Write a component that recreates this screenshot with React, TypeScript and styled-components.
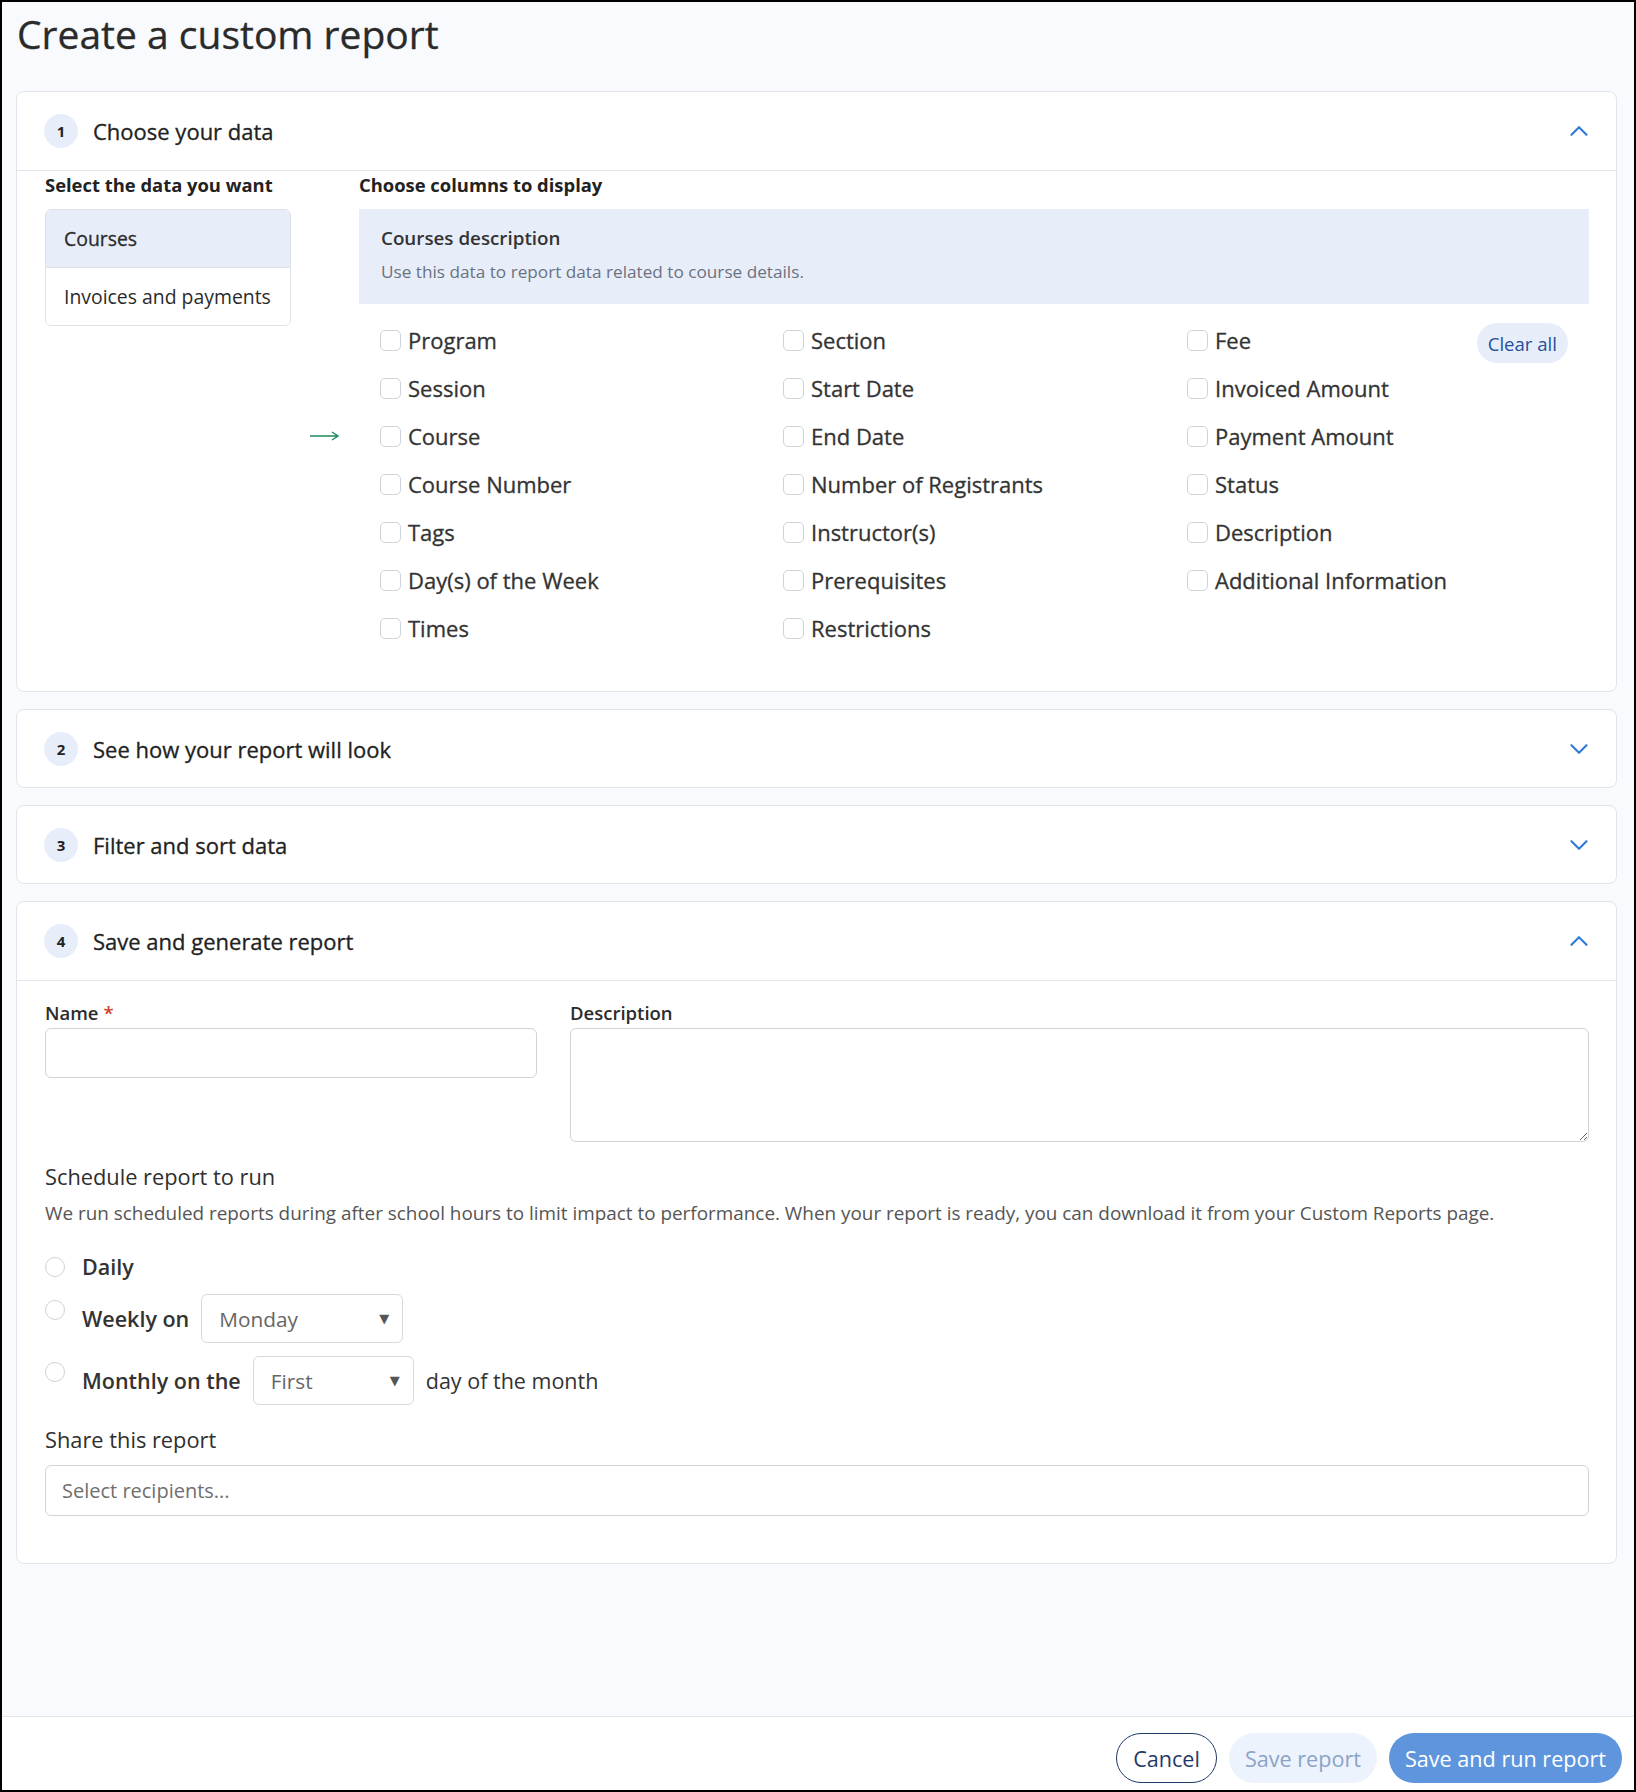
import styled, { createGlobalStyle, css } from "styled-components";
import { ChevronDown, ChevronUp } from "lucide-react";

const GlobalStyle = createGlobalStyle`
  html, body {
    margin: 0;
    padding: 0;
    background: #000;
  }
  body {
    font-family: "Open Sans", "Noto Sans", Arial, sans-serif;
    color: #2b2b2b;
  }
  * {
    box-sizing: border-box;
  }
`;

// Open Sans ships without a 500 weight here, so medium text gets a hairline stroke
const medium = css`
  font-weight: 400;
  -webkit-text-stroke: 0.3px currentColor;
`;

const Frame = styled.div`
  width: 1636px;
  height: 1792px;
  border: 2px solid #000;
  background: #f8fafd;
  display: flex;
  flex-direction: column;
  overflow: hidden;
`;

const Main = styled.main`
  flex: 1;
  padding: 9px 17px 0 14px;
  display: flex;
  flex-direction: column;
  gap: 17px;
`;

const PageTitle = styled.h1`
  margin: 0 0 18px 1px;
  font-size: 39px;
  line-height: 45px;
  color: #2a2a2a;
  ${medium}
`;

const Card = styled.section`
  background: #fff;
  border: 1px solid #e1e4ea;
  border-radius: 8px;
`;

const CardHeader = styled.header<{ $open?: boolean }>`
  height: ${({ $open }) => ($open ? "79px" : "77px")};
  display: flex;
  align-items: center;
  gap: 15px;
  padding: 0 22px 0 27px;
  border-bottom: ${({ $open }) => ($open ? "1px solid #e1e4ea" : "none")};
`;

const StepBadge = styled.span`
  width: 34px;
  height: 34px;
  border-radius: 50%;
  background: #e7eefa;
  display: inline-flex;
  align-items: center;
  justify-content: center;
  font-size: 15px;
  font-weight: 700;
  color: #222;
`;

const StepTitle = styled.h2`
  margin: 0;
  flex: 1;
  font-size: 22px;
  color: #222;
  ${medium}
`;

const Toggle = styled.span`
  display: inline-flex;
  color: #2f7bd8;
`;

const DataBody = styled.div`
  display: grid;
  grid-template-columns: 246px 1fr;
  column-gap: 68px;
  padding: 2px 27px 39px 28px;
`;

const ColumnHeading = styled.h3`
  margin: 0 0 12px;
  font-size: 18.4px;
  line-height: 24px;
  font-weight: 700;
  color: #222;
`;

const SourceList = styled.ul`
  margin: 0;
  padding: 0;
  list-style: none;
  border: 1px solid #dde1e8;
  border-radius: 6px;
  overflow: hidden;
`;

const SourceItem = styled.li<{ $active?: boolean }>`
  height: ${({ $active }) => ($active ? "58px" : "57px")};
  display: flex;
  align-items: center;
  padding-left: 18px;
  font-size: 19.4px;
  color: #2b2b2b;
  background: ${({ $active }) => ($active ? "#e7eefa" : "#fff")};
  border-bottom: ${({ $active }) => ($active ? "1px solid #dde1e8" : "none")};
  ${({ $active }) => $active && medium}
`;

const DescriptionBox = styled.div`
  background: #e7eefa;
  height: 95px;
  padding: 16px 22px 0;
`;

const DescTitle = styled.div`
  font-size: 18.8px;
  line-height: 26px;
  font-weight: 600;
  color: #333;
`;

const DescText = styled.div`
  margin-top: 9px;
  font-size: 17.2px;
  line-height: 24px;
  color: #6b7280;
`;

const Options = styled.div`
  position: relative;
  display: flex;
  padding: 12px 21px 0;
`;

const OptionColumn = styled.div<{ $width: number }>`
  width: ${({ $width }) => $width}px;
  display: flex;
  flex-direction: column;
`;

const OptionRow = styled.label`
  height: 48px;
  display: flex;
  align-items: center;
  gap: 7px;
  font-size: 22px;
  color: #333;
  ${medium}
`;

const Checkbox = styled.input.attrs({ type: "checkbox" })`
  appearance: none;
  margin: 0;
  width: 21px;
  height: 21px;
  border: 1px solid #cfd3da;
  border-radius: 5px;
  background: #fff;
`;

const ClearButton = styled.button`
  margin-left: auto;
  margin-top: 7px;
  flex-shrink: 0;
  white-space: nowrap;
  height: 40px;
  padding: 0 11px;
  border: none;
  border-radius: 20px;
  background: #e7eefa;
  color: #1f4f9c;
  font-family: inherit;
  font-size: 18.6px;
`;

const Pointer = styled.svg`
  position: absolute;
  left: -50px;
  top: 126px;
`;

const FormBody = styled.div`
  padding: 20px 27px 47px 28px;
`;

const FieldGrid = styled.div`
  display: grid;
  grid-template-columns: 492px 1fr;
  column-gap: 33px;
  align-items: start;
`;

const Field = styled.div`
  display: flex;
  flex-direction: column;
  gap: 3px;
`;

const FieldLabel = styled.label`
  font-size: 18.5px;
  line-height: 24px;
  font-weight: 600;
  color: #2b2b2b;
`;

const Required = styled.span`
  color: #d23a2c;
  margin-left: 5px;
`;

const TextInput = styled.input`
  height: 50px;
  border: 1px solid #cfd3da;
  border-radius: 6px;
  padding: 0 16px;
  font-family: inherit;
  font-size: 18px;
  background: #fff;
  &::placeholder {
    color: #6f6f6f;
  }
`;

const TextArea = styled.textarea`
  height: 114px;
  border: 1px solid #cfd3da;
  border-radius: 6px;
  padding: 12px 16px;
  font-family: inherit;
  font-size: 18px;
  background: #fff;
`;

const SubHeading = styled.h3`
  margin: 21px 0 0;
  font-size: 21.8px;
  line-height: 28px;
  font-weight: 400;
  color: #2f2f2f;
`;

const Note = styled.p`
  margin: 10px 0 0;
  font-size: 18.9px;
  line-height: 25px;
  color: #555;
`;

const ScheduleList = styled.div`
  margin-top: 27px;
  display: flex;
  flex-direction: column;
  gap: 13px;
`;

const ScheduleRow = styled.div`
  display: flex;
  align-items: center;
  gap: 12px;
  font-size: 21.5px;
  line-height: 28px;
`;

const Radio = styled.input.attrs({ type: "radio" })<{ $offset?: number }>`
  appearance: none;
  margin: 0 5px 0 0;
  width: 20px;
  height: 20px;
  border: 1px solid #cfd2d8;
  border-radius: 50%;
  background: #fff;
  align-self: ${({ $offset }) => ($offset ? "flex-start" : "center")};
  margin-top: ${({ $offset }) => $offset ?? 0}px;
`;

const OptionText = styled.span`
  font-weight: 600;
  color: #333;
`;

const PlainText = styled.span`
  color: #333;
`;

const SelectBox = styled.div<{ $width: number }>`
  width: ${({ $width }) => $width}px;
  height: 49px;
  border: 1px solid #d6d9de;
  border-radius: 6px;
  background: #fff;
  display: flex;
  align-items: center;
  justify-content: space-between;
  padding: 0 13px 0 17px;
  color: #666;
  font-size: 20.8px;
`;

const Caret = styled.span`
  font-family: "DejaVu Sans", sans-serif;
  font-size: 13px;
  color: #555;
`;

const ShareLabel = styled(SubHeading)`
  margin-top: 21px;
`;

const ShareInput = styled(TextInput)`
  margin-top: 11px;
  width: 100%;
  height: 51px;
  font-size: 20px;
`;

const Footer = styled.footer`
  height: 74px;
  background: #fff;
  border-top: 1px solid #e1e4ea;
  display: flex;
  justify-content: flex-end;
  align-items: flex-start;
  gap: 12px;
  padding: 16px 12px 0 0;
`;

const FooterButton = styled.button<{ $variant: "outline" | "muted" | "primary" }>`
  height: 50px;
  padding: 0 16px;
  border-radius: 25px;
  font-family: inherit;
  font-size: 21.6px;
  border: ${({ $variant }) =>
    $variant === "outline" ? "1.5px solid #1f3a68" : "none"};
  background: ${({ $variant }) =>
    $variant === "outline" ? "#fff" : $variant === "muted" ? "#edf3fc" : "#5f95dc"};
  color: ${({ $variant }) =>
    $variant === "outline" ? "#1f3a68" : $variant === "muted" ? "#8aa3c7" : "#fff"};
`;

const columns: { width: number; items: string[] }[] = [
  {
    width: 403,
    items: ["Program", "Session", "Course", "Course Number", "Tags", "Day(s) of the Week", "Times"],
  },
  {
    width: 404,
    items: ["Section", "Start Date", "End Date", "Number of Registrants", "Instructor(s)", "Prerequisites", "Restrictions"],
  },
  {
    width: 270,
    items: ["Fee", "Invoiced Amount", "Payment Amount", "Status", "Description", "Additional Information"],
  },
];

function StepHeader({ step, title, open }: { step: number; title: string; open?: boolean }) {
  return (
    <CardHeader $open={open}>
      <StepBadge>{step}</StepBadge>
      <StepTitle>{title}</StepTitle>
      <Toggle>
        {open ? <ChevronUp size={30} strokeWidth={1.7} /> : <ChevronDown size={30} strokeWidth={1.7} />}
      </Toggle>
    </CardHeader>
  );
}

export default function App() {
  return (
    <>
      <GlobalStyle />
      <Frame>
        <Main>
          <PageTitle>Create a custom report</PageTitle>

          <Card>
            <StepHeader step={1} title="Choose your data" open />
            <DataBody>
              <div>
                <ColumnHeading>Select the data you want</ColumnHeading>
                <SourceList>
                  <SourceItem $active>Courses</SourceItem>
                  <SourceItem>Invoices and payments</SourceItem>
                </SourceList>
              </div>
              <div>
                <ColumnHeading>Choose columns to display</ColumnHeading>
                <DescriptionBox>
                  <DescTitle>Courses description</DescTitle>
                  <DescText>Use this data to report data related to course details.</DescText>
                </DescriptionBox>
                <Options>
                  <Pointer width="31" height="12" viewBox="0 0 31 12">
                    <path d="M1 6h28M23 2l6 4-6 4" fill="none" stroke="#1e8a5c" strokeWidth="1.4" />
                  </Pointer>
                  {columns.map((col) => (
                    <OptionColumn key={col.items[0]} $width={col.width}>
                      {col.items.map((item) => (
                        <OptionRow key={item}>
                          <Checkbox />
                          {item}
                        </OptionRow>
                      ))}
                    </OptionColumn>
                  ))}
                  <ClearButton>Clear all</ClearButton>
                </Options>
              </div>
            </DataBody>
          </Card>

          <Card>
            <StepHeader step={2} title="See how your report will look" />
          </Card>

          <Card>
            <StepHeader step={3} title="Filter and sort data" />
          </Card>

          <Card>
            <StepHeader step={4} title="Save and generate report" open />
            <FormBody>
              <FieldGrid>
                <Field>
                  <FieldLabel>
                    Name<Required>*</Required>
                  </FieldLabel>
                  <TextInput />
                </Field>
                <Field>
                  <FieldLabel>Description</FieldLabel>
                  <TextArea />
                </Field>
              </FieldGrid>

              <SubHeading>Schedule report to run</SubHeading>
              <Note>
                We run scheduled reports during after school hours to limit impact to performance. When your
                report is ready, you can download it from your Custom Reports page.
              </Note>

              <ScheduleList>
                <ScheduleRow>
                  <Radio name="schedule" />
                  <OptionText>Daily</OptionText>
                </ScheduleRow>
                <ScheduleRow>
                  <Radio name="schedule" $offset={6} />
                  <OptionText>Weekly on</OptionText>
                  <SelectBox $width={202}>
                    Monday
                    <Caret>▼</Caret>
                  </SelectBox>
                </ScheduleRow>
                <ScheduleRow>
                  <Radio name="schedule" $offset={6} />
                  <OptionText>Monthly on the</OptionText>
                  <SelectBox $width={161}>
                    First
                    <Caret>▼</Caret>
                  </SelectBox>
                  <PlainText>day of the month</PlainText>
                </ScheduleRow>
              </ScheduleList>

              <ShareLabel>Share this report</ShareLabel>
              <ShareInput placeholder="Select recipients..." />
            </FormBody>
          </Card>
        </Main>

        <Footer>
          <FooterButton $variant="outline">Cancel</FooterButton>
          <FooterButton $variant="muted">Save report</FooterButton>
          <FooterButton $variant="primary">Save and run report</FooterButton>
        </Footer>
      </Frame>
    </>
  );
}
